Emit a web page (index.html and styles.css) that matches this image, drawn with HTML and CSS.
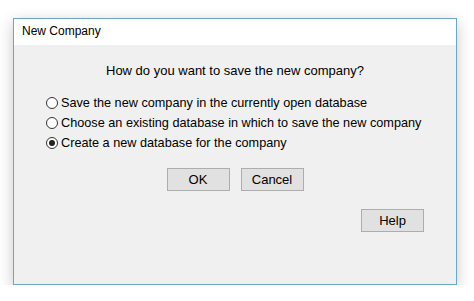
FILE: index.html
```html
<!DOCTYPE html>
<html lang="en">
<head>
    <meta charset="UTF-8">
    <title>New Company</title>
    <link rel="stylesheet" href="styles.css">
</head>
<body>
    <div class="dialog">
        <div class="title-bar">New Company</div>
        <div class="dialog-body">
            <div class="question">How do you want to save the new company?</div>

            <div class="options">
                <label class="option"><span class="radio"></span>Save the new company in the currently open database</label>
                <label class="option"><span class="radio"></span>Choose an existing database in which to save the new company</label>
                <label class="option"><span class="radio checked"></span>Create a new database for the company</label>
            </div>

            <div class="button-row">
                <button class="btn">OK</button>
                <button class="btn">Cancel</button>
            </div>

            <div class="help-row">
                <button class="btn">Help</button>
            </div>
        </div>
    </div>
</body>
</html>
```

FILE: styles.css
```css
body {
    margin: 0;
    background-color: #fff;
    font-family: "Liberation Sans", Arial, sans-serif;
    color: #000;
}

.dialog {
    margin: 18px 0 0 13px;
    width: 442px;
    height: 265px;
    border: 1px solid #6fa6c4;
    background-color: #f0f0f0;
    box-shadow: 0 4px 14px rgba(0, 0, 0, 0.22);
    display: flex;
    flex-direction: column;
}

.title-bar {
    height: 26px;
    background-color: #fff;
    font-size: 12px;
    line-height: 24px;
    padding-left: 8px;
}

.dialog-body {
    flex: 1;
    display: flex;
    flex-direction: column;
}

.question {
    text-align: center;
    font-size: 13px;
    margin-top: 18px;
    line-height: 16px;
    white-space: nowrap;
}

.options {
    margin: 14px 0 0 32px;
    display: flex;
    flex-direction: column;
}

.option {
    display: flex;
    align-items: center;
    height: 20px;
    font-size: 12.7px;
    white-space: nowrap;
}

.radio {
    width: 12px;
    height: 12px;
    border: 1px solid #333;
    border-radius: 50%;
    background-color: #fff;
    margin-right: 3px;
    box-sizing: border-box;
    display: flex;
    align-items: center;
    justify-content: center;
}

.radio.checked::after {
    content: "";
    width: 6px;
    height: 6px;
    border-radius: 50%;
    background-color: #222;
}

.button-row {
    display: flex;
    justify-content: center;
    gap: 11px;
    margin-top: 15px;
}

.btn {
    width: 63px;
    height: 23px;
    background-color: #e1e1e1;
    border: 1px solid #adadad;
    font-family: inherit;
    font-size: 13px;
    padding: 0;
    color: #000;
}

.help-row {
    display: flex;
    justify-content: flex-end;
    padding-right: 32px;
    margin-top: 18px;
}
```
